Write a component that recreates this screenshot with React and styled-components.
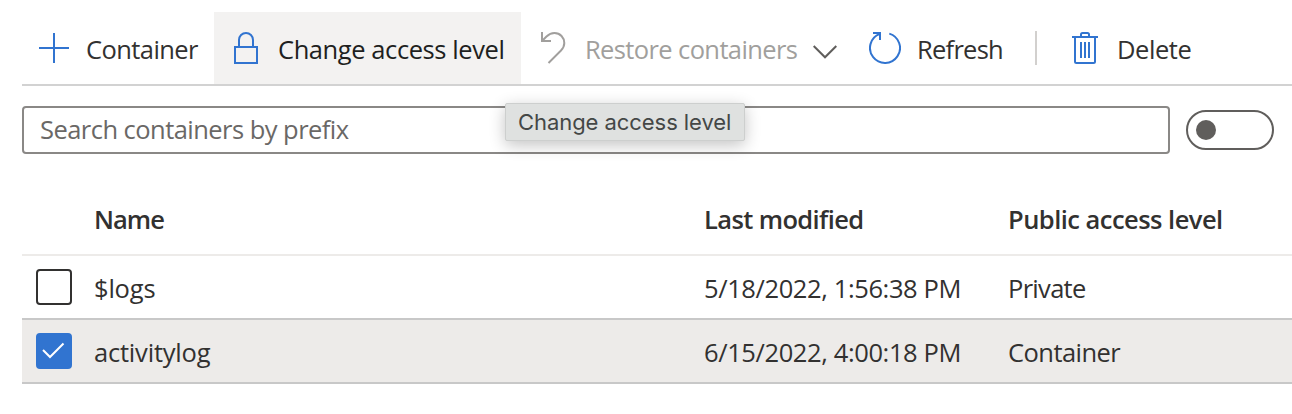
import React from "react";
import styled, { createGlobalStyle } from "styled-components";

const GlobalStyle = createGlobalStyle`
  * { box-sizing: border-box; }
  body {
    margin: 0;
    background: #fff;
    color: #323130;
    font-family: "Open Sans", "Noto Sans", sans-serif;
    font-size: 25.5px;
    overflow: hidden;
  }
`;

const Page = styled.main`
  position: relative;
  height: 414px;
  padding: 12px 0 0 22px;
`;

const Toolbar = styled.div`
  display: flex;
  height: 74px;
  border-bottom: 2px solid #d2d2d2;
`;

const Command = styled.button`
  display: flex;
  align-items: center;
  flex: none;
  width: ${(p) => p.$width}px;
  padding: 0 0 0 16px;
  gap: 16px;
  border: 0;
  background: ${(p) => (p.$active ? "#f3f2f1" : "transparent")};
  color: ${(p) => (p.disabled ? "#a19f9d" : p.$active ? "#201f1e" : "#323130")};
  font: inherit;
  text-align: left;
`;

const Label = styled.span`
  flex: none;
  width: ${(p) => (p.$width ? `${p.$width}px` : "auto")};
  padding-top: 2px;
  line-height: 36px;
  letter-spacing: ${(p) => p.$track || 0}px;
  white-space: nowrap;
`;

const HeadLabel = styled(Label)`
  padding: 0 0 2px;
`;

const Icon = styled.svg`
  flex: none;
  display: block;
  fill: none;
  stroke: ${(p) => p.$color || "#3174d0"};
  stroke-width: 2;
`;

const Chevron = styled(Icon)`
  margin-top: 8px;
`;

const Separator = styled.div`
  align-self: center;
  width: 2px;
  height: 34px;
  margin: 0 16px;
  background: #d2d0ce;
`;

const FilterRow = styled.div`
  display: flex;
  align-items: center;
  gap: 16px;
  margin-top: 20px;
`;

const SearchBox = styled.input`
  width: 1148px;
  height: 48px;
  padding: 0 16px 2px;
  border: 2px solid #8a8886;
  border-radius: 4px;
  background: #fff;
  font: inherit;
  letter-spacing: ${(p) => p.$track}px;
  outline: none;
  &::placeholder { color: #6a6866; opacity: 1; }
`;

const Toggle = styled.div`
  display: flex;
  align-items: center;
  width: 88px;
  height: 40px;
  padding-left: 8px;
  border: 2px solid #605e5c;
  border-radius: 20px;
`;

const Knob = styled.span`
  width: 20px;
  height: 20px;
  border-radius: 50%;
  background: #605e5c;
`;

const Table = styled.div`
  margin-top: 32px;
`;

const Row = styled.div`
  display: grid;
  grid-template-columns: 72px 610px 304px 1fr;
  align-items: center;
  height: ${(p) => (p.$head ? 70 : 64)}px;
  border-bottom: 2px solid ${(p) => (p.$head ? "#edebe9" : "#c8c8c8")};
  background: ${(p) => (p.$selected ? "#edebe9" : "transparent")};
  font-weight: ${(p) => (p.$head ? 600 : 400)};
`;

const Checkbox = styled.span`
  display: grid;
  place-items: center;
  width: 36px;
  height: 36px;
  margin-left: 14px;
  border: 2px solid ${(p) => (p.$checked ? "#3174d0" : "#323130")};
  border-radius: 4px;
  background: ${(p) => (p.$checked ? "#3174d0" : "#fff")};
`;

const Tooltip = styled.div`
  position: absolute;
  left: 505px;
  top: 103px;
  width: 240px;
  height: 38px;
  padding-left: 12px;
  border: 1px solid #cdcfce;
  border-radius: 2px;
  background: #dfe1e0;
  box-shadow: 0 4px 16px rgba(0, 0, 0, 0.24);
  color: #444746;
  font: 22px/37px Inter, sans-serif;
  letter-spacing: ${(p) => p.$track}px;
  white-space: nowrap;
`;

const PlusIcon = () => (
  <Icon width="32" height="32" viewBox="0 0 32 32">
    <path d="M16 1v30M1 16h30" />
  </Icon>
);

const LockIcon = () => (
  <Icon width="32" height="32" viewBox="0 0 32 32">
    <path d="M5 15h22v16H5zM9 15V8a7 7 0 0 1 14 0v7" />
  </Icon>
);

const UndoIcon = () => (
  <Icon width="32" height="32" viewBox="0 0 32 32" $color="#a19f9d">
    <path d="M5 0v9h9M5.500 8.500 9.500 4.500C12 2 14.500 1 17.500 1 23.200 1 27.300 5.500 27.300 11 27.300 14 26 16.500 24 18.500L11.500 31" />
  </Icon>
);

const ChevronIcon = () => (
  <Chevron width="24" height="14" viewBox="0 0 24 14" $color="#605e5c">
    <path d="m.7 1 11.300 11.300L23.300 1" />
  </Chevron>
);

const RefreshIcon = () => (
  <Icon width="32" height="32" viewBox="0 0 32 32">
    <path d="M20.300 1.600A15 15 0 1 1 10.800 1.900M4 1h7v7" />
  </Icon>
);

const TrashIcon = () => (
  <Icon width="32" height="32" viewBox="0 0 32 32">
    <path d="M3 5h26M12 5V2.500Q12 1 13.500 1h5Q20 1 20 2.500V5M6 5v24.500Q6 31 7.500 31h17Q26 31 26 29.500V5M12 10v16M16 10v16M20 10v16" />
  </Icon>
);

const CheckIcon = () => (
  <Icon width="24" height="20" viewBox="0 0 24 20" $color="#fff">
    <path d="m1 9 7 7L21.500 2.500" />
  </Icon>
);

const containers = [
  {
    name: "$logs",
    modified: "5/18/2022, 1:56:38 PM",
    access: "Private",
    track: [-0.2, -0.39, -0.7],
  },
  {
    name: "activitylog",
    modified: "6/15/2022, 4:00:18 PM",
    access: "Container",
    track: [-0.2, -0.39, -0.55],
    selected: true,
  },
];

export default function App() {
  return (
    <>
      <GlobalStyle />
      <Page>
        <Toolbar>
          <Command $width={192}><PlusIcon /><Label $track={-0.58}>Container</Label></Command>
          <Command $width={307} $active><LockIcon /><Label $track={-0.42}>Change access level</Label></Command>
          <Command $width={332} disabled>
            <UndoIcon /><Label $width={212} $track={-0.62}>Restore containers</Label><ChevronIcon />
          </Command>
          <Command $width={166}><RefreshIcon /><Label $track={-0.75}>Refresh</Label></Command>
          <Separator />
          <Command $width={150}><TrashIcon /><Label $track={-0.45}>Delete</Label></Command>
        </Toolbar>
        <FilterRow>
          <SearchBox placeholder="Search containers by prefix" $track={-0.54} />
          <Toggle><Knob /></Toggle>
        </FilterRow>
        <Table>
          <Row $head>
            <span />
            <HeadLabel $track={-0.95}>Name</HeadLabel>
            <HeadLabel $track={-0.62}>Last modified</HeadLabel>
            <HeadLabel $track={-0.53}>Public access level</HeadLabel>
          </Row>
          {containers.map((c) => (
            <Row key={c.name} $selected={c.selected}>
              <Checkbox $checked={c.selected}>{c.selected && <CheckIcon />}</Checkbox>
              <Label $track={c.track[0]}>{c.name}</Label>
              <Label $track={c.track[1]}>{c.modified}</Label>
              <Label $track={c.track[2]}>{c.access}</Label>
            </Row>
          ))}
        </Table>
        <Tooltip $track={-0.06}>Change access level</Tooltip>
      </Page>
    </>
  );
}
